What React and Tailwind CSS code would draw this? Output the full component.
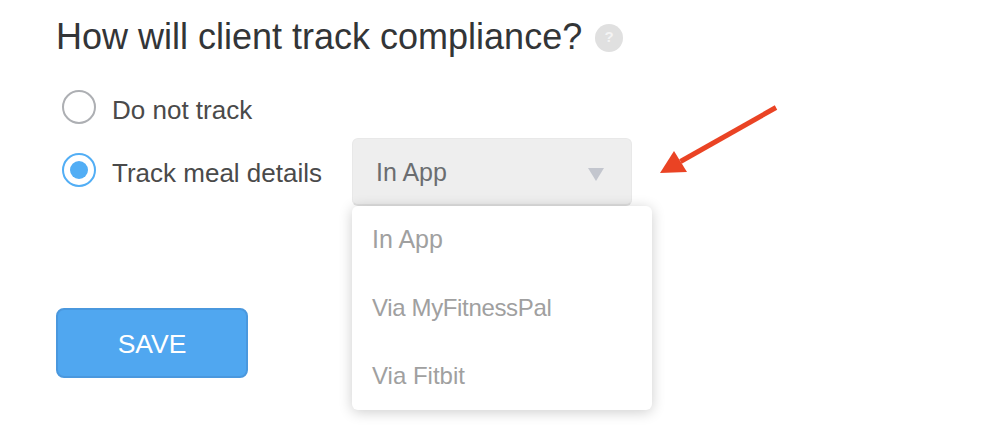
export default function App() {
  return (
    <div className="w-[992px] h-[438px] bg-white overflow-hidden pl-[56px] font-['Liberation_Sans',Arial,sans-serif]">
      <div className="flex items-center h-[38px] mt-[17px] gap-[13px]">
        <h1 className="text-[36px] leading-[38px] text-[#333537] font-normal mt-[1px]">How will client track compliance?</h1>
        <span className="w-[28px] h-[28px] rounded-full bg-[#e0e0e0] text-[#f4f4f4] text-[15px] font-bold flex items-center justify-center mt-[3px]">?</span>
      </div>
      <div className="flex items-center h-[34px] mt-[35px] ml-[6px] gap-[16px]">
        <span className="w-[34px] h-[34px] rounded-full border-2 border-[#adafb3] bg-white"></span>
        <span className="text-[26px] leading-[34px] text-[#4a4a4a] mt-[6px]">Do not track</span>
      </div>
      <div className="relative flex items-center h-[68px] mt-[14px] ml-[6px]">
        <span className="w-[34px] h-[34px] rounded-full border-2 border-[#52aef5] bg-white flex items-center justify-center -mt-[4px]">
          <span className="w-[18px] h-[18px] rounded-full bg-[#52aef5]"></span>
        </span>
        <span className="text-[26px] leading-[34px] text-[#4a4a4a] ml-[16px] w-[240px] mt-[2px]">Track meal details</span>
        <div className="w-[280px] h-[68px] rounded-[6px] bg-[#eeeeee] border border-[#e8e8e8] border-b-2 border-b-[#e0e0e0] flex items-center justify-between pl-[23px] pr-[27px]">
          <span className="text-[25px] text-[#6b6d70] mt-[2px]">In App</span>
          <svg className="mt-[5px]" width="16" height="13" viewBox="0 0 16 13"><path d="M0 0H16L8 13Z" fill="#c3c6ce" /></svg>
        </div>
        <svg className="absolute left-[596px] -top-[33px]" width="120" height="72" viewBox="0 0 120 72">
          <path d="M118 2.5 L22.5 56.5" stroke="#ea4324" strokeWidth="5" fill="none" />
          <path d="M2 68 L16 46 L29 67 Z" fill="#ea4324" />
        </svg>
        <div className="absolute left-[290px] top-[68px] w-[300px] h-[204px] bg-white rounded-[6px] shadow-[0_2px_14px_rgba(0,0,0,0.2)] flex flex-col pl-[20px] text-[24px] text-[#a0a0a0]">
          <div className="h-[68px] flex items-center text-[25px]">In App</div>
          <div className="h-[68px] flex items-center tracking-[-0.35px]">Via MyFitnessPal</div>
          <div className="h-[68px] flex items-center">Via Fitbit</div>
        </div>
      </div>
      <button className="block mt-[102px] w-[192px] h-[70px] pt-[4px] rounded-[8px] bg-[#50a7f0] border-2 border-[#4a98de] text-white text-[26.5px]">SAVE</button>
    </div>
  );
}
